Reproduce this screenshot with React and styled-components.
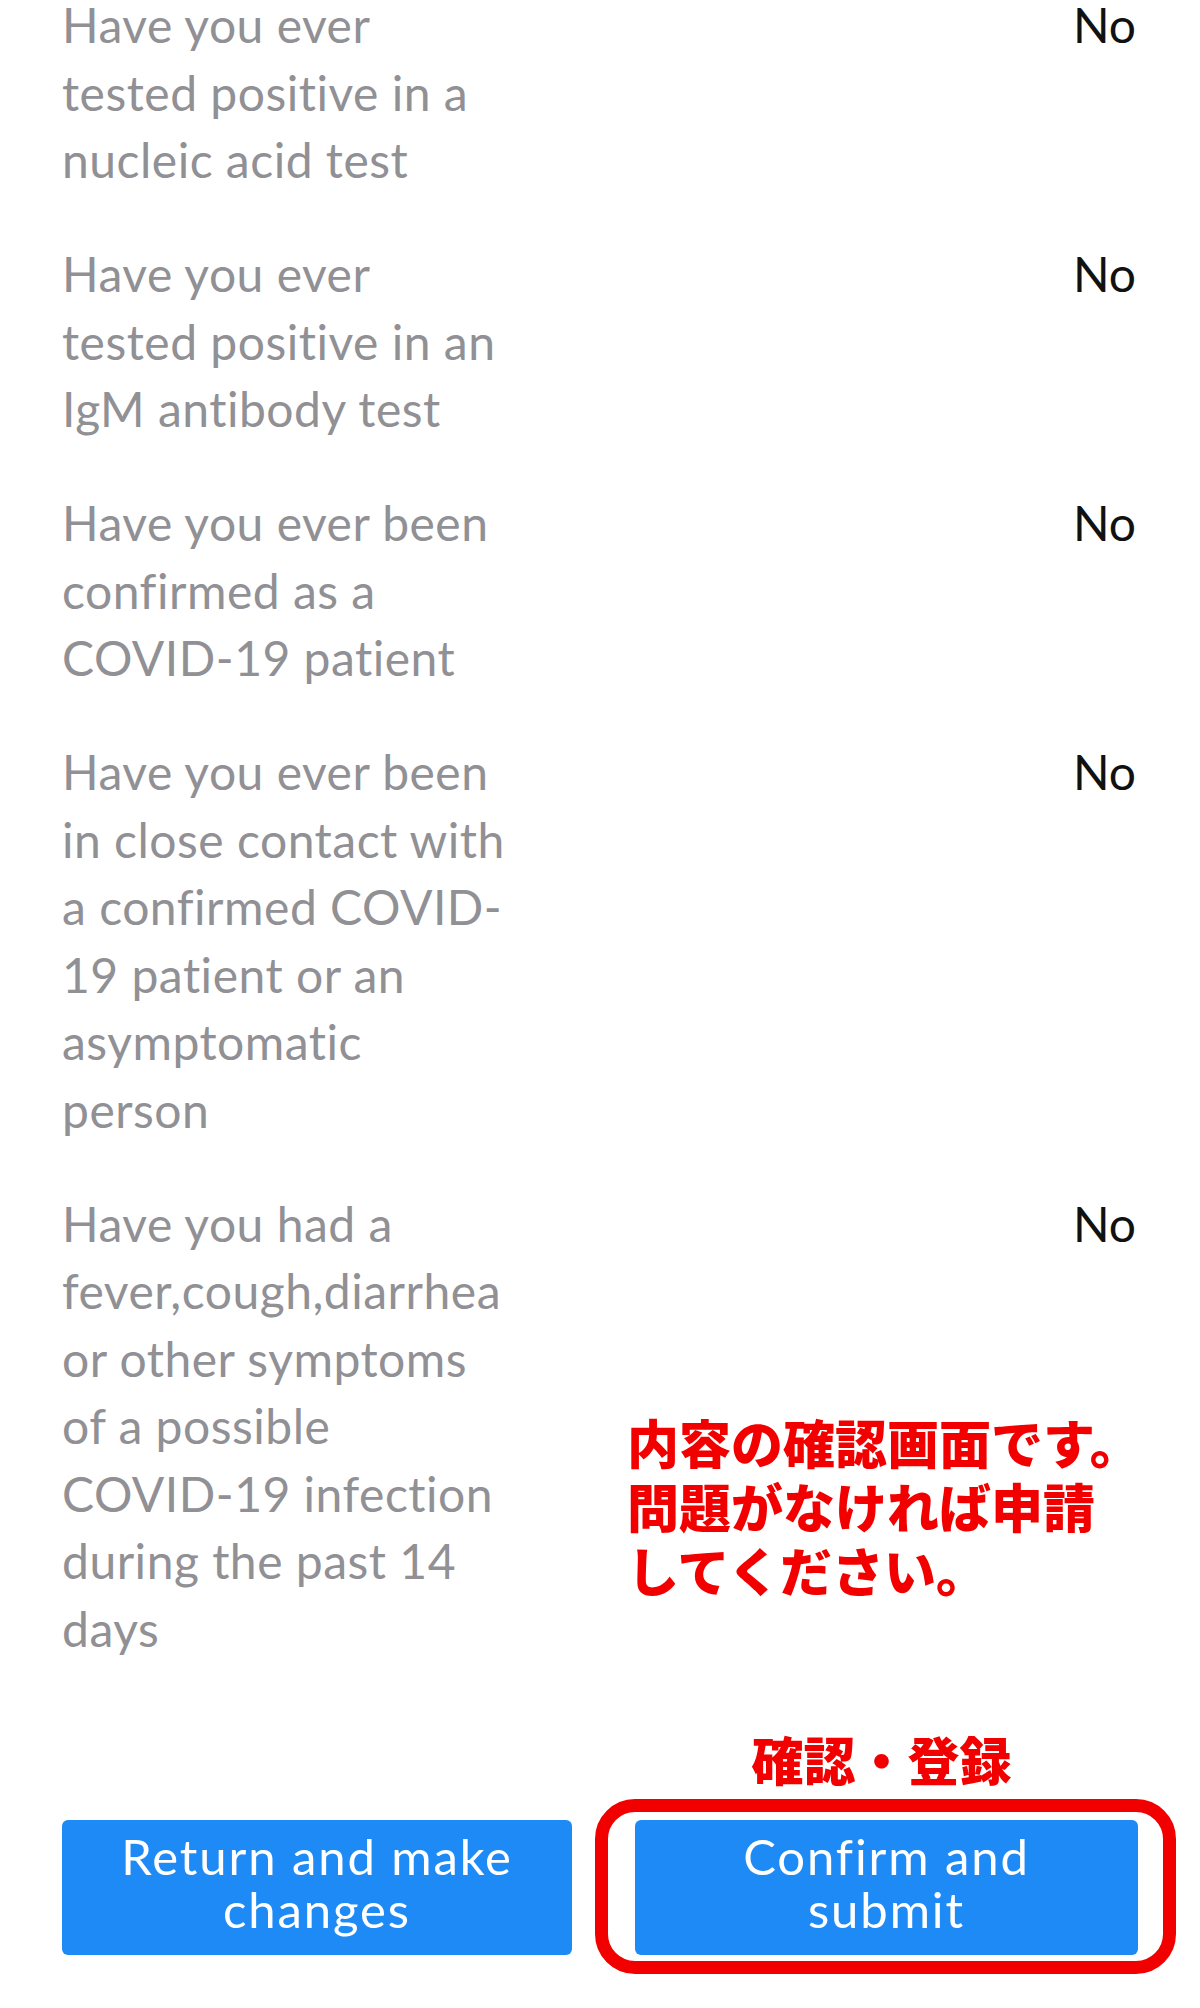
import React from "react";
import styled, { createGlobalStyle } from "styled-components";

const GlobalStyle = createGlobalStyle`
  html, body {
    margin: 0;
    padding: 0;
    background: #ffffff;
  }
  body {
    font-family: "Lato", "Noto Sans CJK JP", sans-serif;
  }
`;

const Page = styled.div`
  width: 1200px;
  height: 2008px;
  overflow: hidden;
  background: #ffffff;
  box-sizing: border-box;
`;

const List = styled.div`
  display: flex;
  flex-direction: column;
  gap: 46.5px;
  margin-top: -9px;
`;

const Row = styled.div`
  position: relative;
  display: flex;
  justify-content: space-between;
  align-items: flex-start;
  padding: 0 64px 0 62px;
`;

const Label = styled.div`
  display: flex;
  flex-direction: column;
  color: #909095;
  font-family: "Lato", sans-serif;
  font-size: 48px;
  line-height: 67.5px;
  letter-spacing: 0.5px;
`;

const Line = styled.span`
  display: block;
  white-space: nowrap;
`;

const Value = styled.div`
  color: #111111;
  font-family: "Lato", sans-serif;
  font-size: 48px;
  line-height: 67.5px;
`;

const Annotation = styled.div`
  position: absolute;
  top: 220px;
  left: 627px;
  color: #f20000;
  font-family: "Noto Sans CJK JP", sans-serif;
  font-weight: 900;
  font-size: 52px;
  line-height: 64px;
  white-space: nowrap;
`;

const Footer = styled.div`
  display: flex;
  align-items: flex-end;
  gap: 23px;
  padding-left: 62px;
  margin-top: 69px;
`;

const LeftSlot = styled.div`
  margin-bottom: 19px;
`;

const RightColumn = styled.div`
  display: flex;
  flex-direction: column;
  align-items: center;
`;

const Tag = styled.div`
  color: #f20000;
  font-family: "Noto Sans CJK JP", sans-serif;
  font-weight: 900;
  font-size: 52px;
  line-height: 56px;
  margin-bottom: 12px;
  margin-right: 8px;
  white-space: nowrap;
`;

const Frame = styled.div`
  border: 13px solid #f20000;
  border-radius: 40px;
  padding: 8px 25px 6px 27px;
`;

const Button = styled.button`
  display: flex;
  flex-direction: column;
  align-items: center;
  justify-content: flex-start;
  box-sizing: border-box;
  width: ${(p) => p.$w}px;
  height: 135px;
  padding: 10px 8px 19px;
  border: none;
  border-radius: 6px;
  background: #1e8af6;
  color: #ffffff;
  font-family: "Lato", sans-serif;
  font-size: 49px;
  line-height: 53px;
  letter-spacing: 1.9px;
  cursor: pointer;
`;

const rows = [
  { lines: ["Have you ever", "tested positive in a", "nucleic acid test"], value: "No" },
  { lines: ["Have you ever", "tested positive in an", "IgM antibody test"], value: "No" },
  { lines: ["Have you ever been", "confirmed as a", "COVID-19 patient"], value: "No" },
  {
    lines: [
      "Have you ever been",
      "in close contact with",
      "a confirmed COVID-",
      "19 patient or an",
      "asymptomatic",
      "person",
    ],
    value: "No",
  },
  {
    lines: [
      "Have you had a",
      "fever,cough,diarrhea",
      "or other symptoms",
      "of a possible",
      "COVID-19 infection",
      "during the past 14",
      "days",
    ],
    value: "No",
    note: ["内容の確認画面です。", "問題がなければ申請", "してください。"],
  },
];

export default function App() {
  return (
    <Page>
      <GlobalStyle />
      <List>
        {rows.map((r, i) => (
          <Row key={i}>
            <Label>
              {r.lines.map((l, j) => (
                <Line key={j}>{l}</Line>
              ))}
            </Label>
            <Value>{r.value}</Value>
            {r.note && (
              <Annotation>
                {r.note.map((l, j) => (
                  <Line key={j}>{l}</Line>
                ))}
              </Annotation>
            )}
          </Row>
        ))}
      </List>
      <Footer>
        <LeftSlot>
          <Button $w={510}>
            <Line>Return and make</Line>
            <Line>changes</Line>
          </Button>
        </LeftSlot>
        <RightColumn>
          <Tag>確認・登録</Tag>
          <Frame>
            <Button $w={503}>
              <Line>Confirm and</Line>
              <Line>submit</Line>
            </Button>
          </Frame>
        </RightColumn>
      </Footer>
    </Page>
  );
}
